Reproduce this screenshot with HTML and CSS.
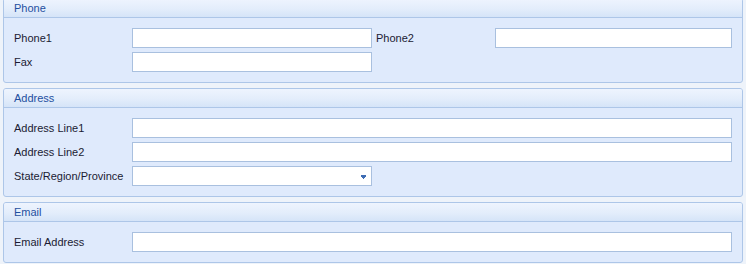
FILE: index.html
```html
<!DOCTYPE html>
<html>
<head>
<meta charset="utf-8">
<link rel="stylesheet" href="styles.css">
</head>
<body>
<div class="form">
  <section class="group">
    <div class="group-header">Phone</div>
    <div class="group-body grid4">
      <label class="lbl">Phone1</label>
      <div class="input"></div>
      <label class="lbl lbl2">Phone2</label>
      <div class="input"></div>
      <label class="lbl">Fax</label>
      <div class="input"></div>
    </div>
  </section>
  <section class="group">
    <div class="group-header">Address</div>
    <div class="group-body grid2">
      <label class="lbl">Address Line1</label>
      <div class="input"></div>
      <label class="lbl">Address Line2</label>
      <div class="input"></div>
      <label class="lbl">State/Region/Province</label>
      <div class="input combo">
        <svg class="arrow" width="5" height="4" viewBox="0 0 5 4" shape-rendering="crispEdges"><path d="M0 0h5v1H0zM0 1h5v1H0zM1 2h3v1H1zM2 3h1v1H2z" fill="#3f6db4"/></svg>
      </div>
    </div>
  </section>
  <section class="group">
    <div class="group-header">Email</div>
    <div class="group-body grid2">
      <label class="lbl">Email Address</label>
      <div class="input"></div>
    </div>
  </section>
</div>
</body>
</html>
```
FILE: styles.css
```css
html, body {
  margin: 0;
  padding: 0;
  background: #eef3fa;
  font-family: "Liberation Sans", Arial, sans-serif;
  font-size: 11px;
  color: #1b1b33;
  overflow: hidden;
}
.form {
  margin-top: -2px;
  padding: 0 3px;
  display: flex;
  flex-direction: column;
  gap: 5px;
}
.group {
  border: 1px solid #adc6e8;
  border-radius: 3px;
  background: #dfeafc;
}
.group-header {
  height: 18px;
  line-height: 18px;
  padding-left: 10px;
  border-bottom: 1px solid #adc6e8;
  background: linear-gradient(to bottom, #eef4fe 0%, #e3edfb 55%, #d5e4f8 100%);
  color: #1f4f9f;
  border-radius: 2px 2px 0 0;
}
.group-body {
  padding: 10px 10px 10px 10px;
  display: grid;
  row-gap: 4px;
  align-items: center;
}
.grid4 {
  grid-template-columns: 118px 240px 123px 1fr;
}
.grid2 {
  grid-template-columns: 118px 240px 1fr;
}
.grid2 .input {
  grid-column: 2 / 4;
}
.grid2 .input.combo {
  grid-column: 2 / 3;
}
.lbl {
  line-height: 20px;
  white-space: nowrap;
}
.lbl2 {
  padding-left: 4px;
}
.input {
  height: 18px;
  background: #fff;
  border: 1px solid #a9c0df;
}
.combo {
  display: flex;
  align-items: center;
  justify-content: flex-end;
  padding-right: 5px;
}
.arrow {
  display: block;
  margin-top: 1px;
}
```
